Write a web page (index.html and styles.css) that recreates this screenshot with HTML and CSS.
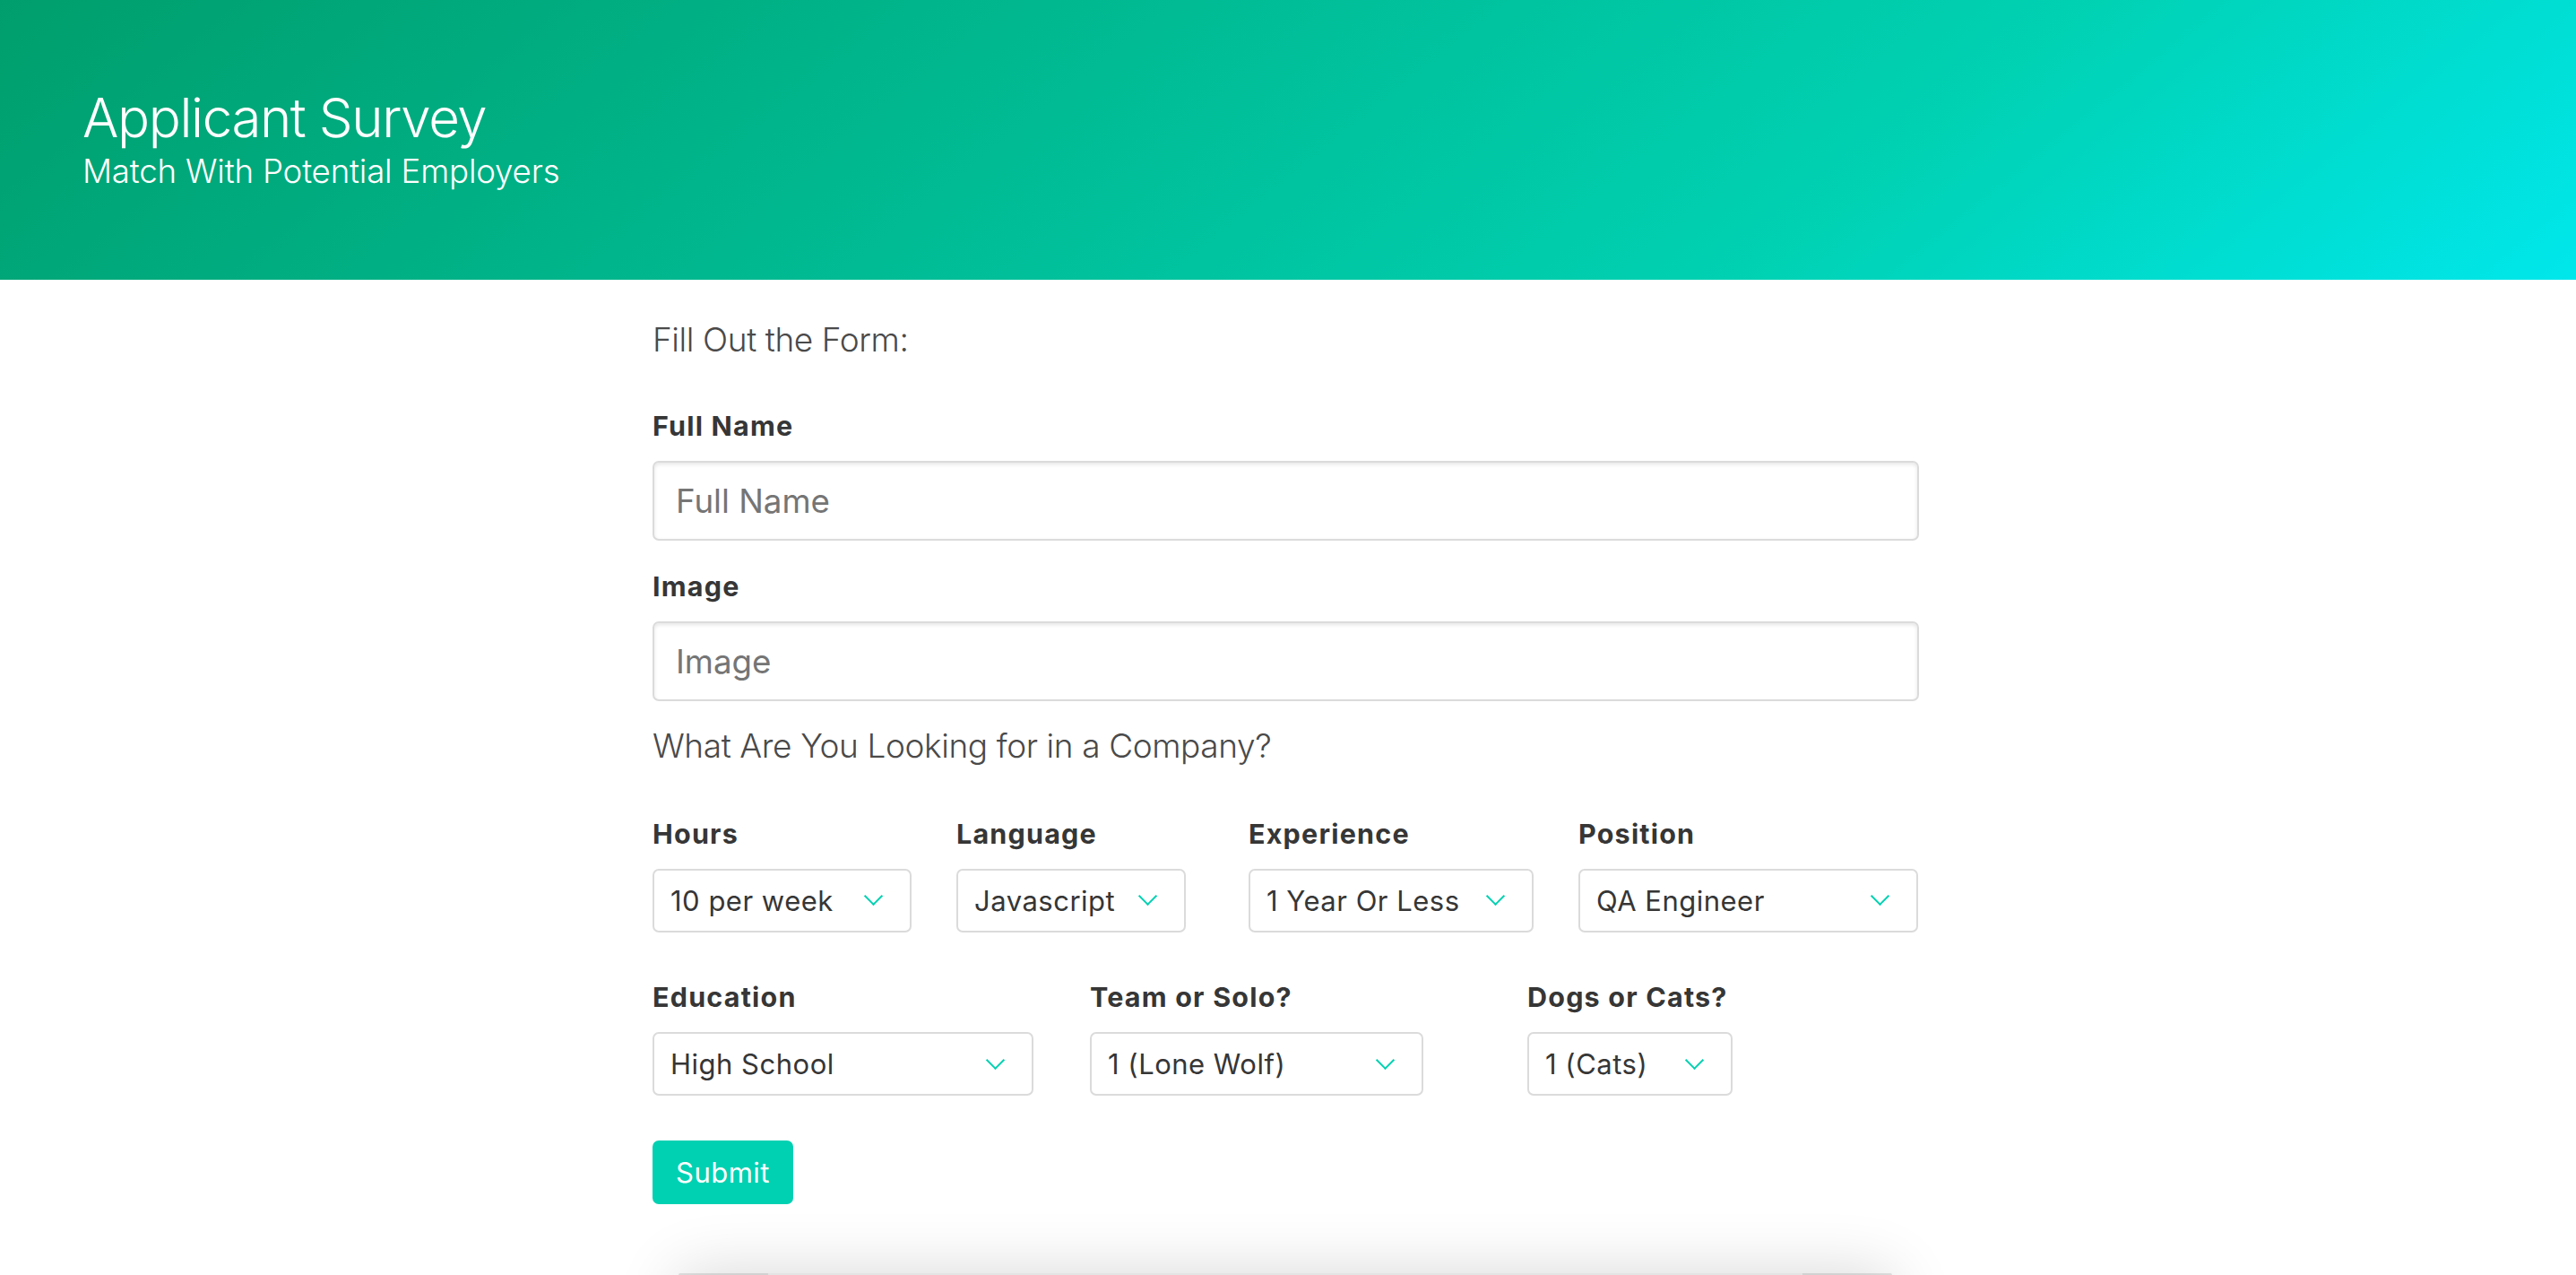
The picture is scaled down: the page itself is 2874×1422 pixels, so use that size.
FILE: index.html
```html
<!DOCTYPE html>
<html lang="en">
<head>
<meta charset="utf-8">
<title>Applicant Survey</title>
<link rel="stylesheet" href="styles.css">
</head>
<body>
<header class="hero">
  <h1 class="hero-title">Applicant Survey</h1>
  <h2 class="hero-subtitle">Match With Potential Employers</h2>
</header>
<main class="survey">
  <h3 class="section-heading">Fill Out the Form:</h3>
  <div class="field field-first">
    <label class="label" for="name">Full Name</label>
    <input class="input" id="name" type="text" placeholder="Full Name">
  </div>
  <div class="field field-second">
    <label class="label" for="image">Image</label>
    <input class="input" id="image" type="text" placeholder="Image">
  </div>
  <h3 class="section-heading company">What Are You Looking for in a Company?</h3>
  <div class="row row-four">
    <div class="field">
      <label class="label">Hours</label>
      <div class="select w-hours"><select><option>10 per week</option><option>20 per week</option><option>40 per week</option></select></div>
    </div>
    <div class="field">
      <label class="label">Language</label>
      <div class="select w-language"><select><option>Javascript</option><option>Python</option><option>Java</option></select></div>
    </div>
    <div class="field">
      <label class="label">Experience</label>
      <div class="select w-experience"><select><option>1 Year Or Less</option><option>2-5 Years</option></select></div>
    </div>
    <div class="field">
      <label class="label">Position</label>
      <div class="select w-position"><select><option>QA Engineer</option><option>Front End Developer</option></select></div>
    </div>
  </div>
  <div class="row row-three">
    <div class="field">
      <label class="label">Education</label>
      <div class="select w-education"><select><option>High School</option><option>Bachelor's Degree</option></select></div>
    </div>
    <div class="field">
      <label class="label">Team or Solo?</label>
      <div class="select w-team"><select><option>1 (Lone Wolf)</option><option>5 (Team Player)</option></select></div>
    </div>
    <div class="field">
      <label class="label">Dogs or Cats?</label>
      <div class="select w-pets"><select><option>1 (Cats)</option><option>5 (Dogs)</option></select></div>
    </div>
  </div>
  <button class="button" type="button">Submit</button>
  <div class="results-card"></div>
</main>
</body>
</html>
```
FILE: styles.css
```css
html, body {
  margin: 0;
  padding: 0;
  height: 100%;
  overflow: hidden;
  background: #ffffff;
}

body {
  font-family: "Inter", "Noto Sans", sans-serif;
  color: #4a4a4a;
}

.hero {
  box-sizing: border-box;
  height: 312px;
  padding: 97px 0 0 92px;
  background-image: linear-gradient(141deg, #009e6c 0%, #00d1b2 71%, #00e7eb 100%);
  color: #ffffff;
}

.hero-title {
  margin: 0;
  font-size: 60px;
  line-height: 68px;
  font-weight: 300;
  letter-spacing: -1.4px;
}

.hero-subtitle {
  margin: 4px 0 0;
  font-size: 36.7px;
  line-height: 44px;
  font-weight: 300;
  letter-spacing: -0.2px;
}

.survey {
  width: 1413px;
  margin-left: 728px;
  padding-top: 44.5px;
}

.section-heading {
  margin: 0;
  font-size: 37px;
  line-height: 44px;
  font-weight: 300;
  color: #4a4a4a;
  letter-spacing: -0.4px;
}

.section-heading.company {
  margin-top: 28px;
}

.field {
  display: flex;
  flex-direction: column;
  align-items: flex-start;
}

.field-first {
  margin-top: 52.8px;
}

.field-second {
  margin-top: 29.3px;
}

.label {
  display: block;
  margin-bottom: 16.7px;
  font-size: 30.5px;
  line-height: 44px;
  font-weight: 700;
  letter-spacing: 1.2px;
  color: #363636;
}

.input {
  box-sizing: border-box;
  width: 100%;
  height: 89px;
  margin: 0;
  padding: 0 24px;
  border: 2px solid #dbdbdb;
  border-radius: 7px;
  box-shadow: inset 0 2px 4px rgba(10, 10, 10, 0.1);
  background: #ffffff;
  font-family: inherit;
  font-size: 36.7px;
  color: #363636;
  outline: none;
}

.input::placeholder {
  color: #757575;
  opacity: 1;
}

.row {
  display: grid;
}

.row-four {
  margin-top: 54px;
  grid-template-columns: 339px 326px 368px 1fr;
}

.row-three {
  margin-top: 50.8px;
  grid-template-columns: 488px 488px 1fr;
}

.select {
  position: relative;
  height: 71px;
}

.select::after {
  content: "";
  position: absolute;
  top: 50%;
  right: 35px;
  width: 15px;
  height: 15px;
  margin-top: -12px;
  border-left: 2px solid #00d1b2;
  border-bottom: 2px solid #00d1b2;
  box-sizing: border-box;
  transform: rotate(-45deg);
  pointer-events: none;
}

.select select {
  -webkit-appearance: none;
  appearance: none;
  box-sizing: border-box;
  width: 100%;
  height: 71px;
  margin: 0;
  padding: 0 64px 0 18px;
  border: 2px solid #dbdbdb;
  border-radius: 7px;
  background: #ffffff;
  font-family: inherit;
  font-size: 31px;
  letter-spacing: 0.5px;
  line-height: 67px;
  color: #363636;
  outline: none;
}

.w-hours { width: 289px; }
.w-language { width: 256px; }
.w-experience { width: 318px; }
.w-position { width: 379px; }
.w-education { width: 425px; }
.w-team { width: 372px; }
.w-pets { width: 229px; }

.button {
  display: block;
  box-sizing: border-box;
  height: 71px;
  margin: 49.5px 0 0;
  padding: 0 26px;
  border: none;
  border-radius: 7px;
  background: #00d1b2;
  color: #ffffff;
  font-family: inherit;
  font-size: 31px;
  letter-spacing: 0.5px;
  line-height: 71px;
  font-weight: 400;
}

.results-card {
  position: relative;
  height: 2px;
  margin: 77px 30px 0 29px;
  background: #e4e4e4;
  border-radius: 4px 4px 0 0;
}

.results-card::before {
  content: "";
  position: absolute;
  top: 0;
  left: 100px;
  right: 100px;
  height: 2px;
  box-shadow: 0 100px 70px 100px rgba(0, 0, 0, 0.16);
}
```
